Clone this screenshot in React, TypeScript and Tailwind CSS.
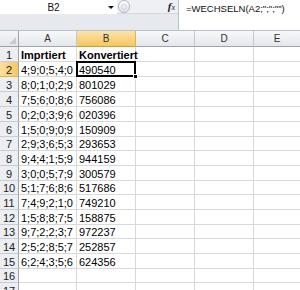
const rows: [string, string][] = [
  ["4;9;0;5;4;0", "490540"],
  ["8;0;1;0;2;9", "801029"],
  ["7;5;6;0;8;6", "756086"],
  ["0;2;0;3;9;6", "020396"],
  ["1;5;0;9;0;9", "150909"],
  ["2;9;3;6;5;3", "293653"],
  ["9;4;4;1;5;9", "944159"],
  ["3;0;0;5;7;9", "300579"],
  ["5;1;7;6;8;6", "517686"],
  ["7;4;9;2;1;0", "749210"],
  ["1;5;8;8;7;5", "158875"],
  ["9;7;2;2;3;7", "972237"],
  ["2;5;2;8;5;7", "252857"],
  ["6;2;4;3;5;6", "624356"],
];

// row heights incl. bottom grid line (image is scaled a little, so 14/15 mix)
const heights = [
  "h-[15px]", "h-[15px]", "h-[15px]", "h-[15px]", "h-[15px]", "h-[15px]", "h-[14px]", "h-[15px]",
  "h-[15px]", "h-[14px]", "h-[15px]", "h-[15px]", "h-[14px]", "h-[15px]", "h-[15px]", "h-[14px]",
  "h-[15px]",
];

const grid = "border-r border-b border-[#d9d9d9]";

function Cell({ children, w, bold }: { children?: React.ReactNode; w: string; bold?: boolean }) {
  return (
    <div className={`${w} shrink-0 ${grid} flex items-end pl-[2px] overflow-hidden whitespace-nowrap ${bold ? "font-bold" : ""}`}>
      {children}
    </div>
  );
}

export default function App() {
  return (
    <div className="w-[300px] h-[290px] overflow-hidden bg-white text-[#111] text-[9.5px] leading-none font-['Liberation_Sans',Arial,sans-serif]">
      {/* Name box + formula bar */}
      <div className="flex h-[31px] border-b border-[#b9c0c9]">
        <div className="w-[178px] shrink-0 flex flex-col">
          <div className="flex h-[14px]">
            <div className="w-[104px] bg-white flex items-center justify-center text-[10px] pt-[1px] pl-[3px]">B2</div>
            <div className="w-[13px] bg-white flex items-center justify-center">
              <div className="w-0 h-0 border-l-[3px] border-r-[3px] border-t-[3px] border-l-transparent border-r-transparent border-t-[#111]" />
            </div>
            <div className="flex-1 bg-[#eef0f3] flex items-center border-b border-[#d5d9de]">
              <div className="w-[12px] h-[13px] ml-[1px] rounded-full border border-[#b4b9c0] bg-gradient-to-b from-[#fdfdfd] to-[#dfe2e6] flex items-center justify-center">
                <div className="w-[6px] h-[6px] rounded-full border border-[#cfd3d8]" />
              </div>
              <div className="ml-auto mr-[3px] font-['Liberation_Serif',serif] italic font-bold text-[11px] text-[#222] leading-none">
                f<span className="text-[8px] font-normal">x</span>
              </div>
            </div>
          </div>
          <div className="flex-1 bg-[#e6e9ed]" />
        </div>
        <div className="flex-1 border-l border-[#b9c0c9] bg-white pl-[7px] pt-[4px] text-[9.5px] whitespace-nowrap">
          =WECHSELN(A2;&quot;;&quot;;&quot;&quot;)
        </div>
      </div>

      {/* Column headers */}
      <div className="flex h-[16px] text-[#333] text-[10px]">
        <div className="w-[19px] shrink-0 bg-gradient-to-b from-[#f4f5f7] to-[#e3e6ea] border-r border-b border-[#9ea4ab] flex items-end justify-end p-[2px]">
          <svg width="7" height="7" viewBox="0 0 7 7">
            <polygon points="7,0 7,7 0,7" fill="#c8ccd2" />
          </svg>
        </div>
        <div className="w-[58px] shrink-0 bg-gradient-to-b from-[#f7f8f9] to-[#e4e7eb] border-r border-[#c5c9cf] border-b border-b-[#9ea4ab] flex items-end justify-center pb-[2px]">A</div>
        <div className="w-[59px] shrink-0 bg-gradient-to-b from-[#fbe3a7] to-[#f4c75e] border-r border-[#e2b54c] border-b border-b-[#c99f3e] flex items-end justify-center pb-[2px]">B</div>
        <div className="w-[59px] shrink-0 bg-gradient-to-b from-[#f7f8f9] to-[#e4e7eb] border-r border-[#c5c9cf] border-b border-b-[#9ea4ab] flex items-end justify-center pb-[2px]">C</div>
        <div className="w-[59px] shrink-0 bg-gradient-to-b from-[#f7f8f9] to-[#e4e7eb] border-r border-[#c5c9cf] border-b border-b-[#9ea4ab] flex items-end justify-center pb-[2px]">D</div>
        <div className="flex-1 bg-gradient-to-b from-[#f7f8f9] to-[#e4e7eb] border-b border-b-[#9ea4ab] flex items-end justify-center pb-[2px]">E</div>
      </div>

      {/* Rows */}
      <div className="font-['Liberation_Sans_Narrow','Liberation_Sans',sans-serif] text-[11px] text-black">
        {Array.from({ length: 17 }, (_, i) => {
          const n = i + 1;
          const data = n >= 2 && n <= 15 ? rows[n - 2] : null;
          const sel = n === 2;
          return (
            <div key={n} className={`flex ${heights[i]}`}>
              <div
                className={`w-[19px] shrink-0 border-r border-r-[#9ea4ab] border-b flex items-end justify-center text-[#222] ${
                  sel ? "bg-gradient-to-r from-[#fbe0a0] to-[#f4c761] border-b-[#e2b54c]" : "bg-[#eceef1] border-b-[#c9cdd2]"
                }`}
              >
                {n}
              </div>
              <Cell w="w-[58px]" bold={n === 1}>
                {n === 1 ? "Imprtiert" : data?.[0]}
              </Cell>
              <div className={`w-[59px] shrink-0 ${grid} relative flex items-end pl-[2px] whitespace-nowrap ${n === 1 ? "font-bold" : ""}`}>
                {n === 1 ? "Konvertiert" : data?.[1]}
                {sel && (
                  <>
                    <div className="absolute left-[-1px] top-[-1px] right-[-1px] bottom-[-1px] border-2 border-black" />
                    <div className="absolute right-[-3px] bottom-[-3px] w-[5px] h-[5px] bg-black border border-white z-10" />
                  </>
                )}
              </div>
              <Cell w="w-[59px]" />
              <Cell w="w-[59px]" />
              <div className="flex-1 border-b border-[#d9d9d9]" />
            </div>
          );
        })}
      </div>
    </div>
  );
}
